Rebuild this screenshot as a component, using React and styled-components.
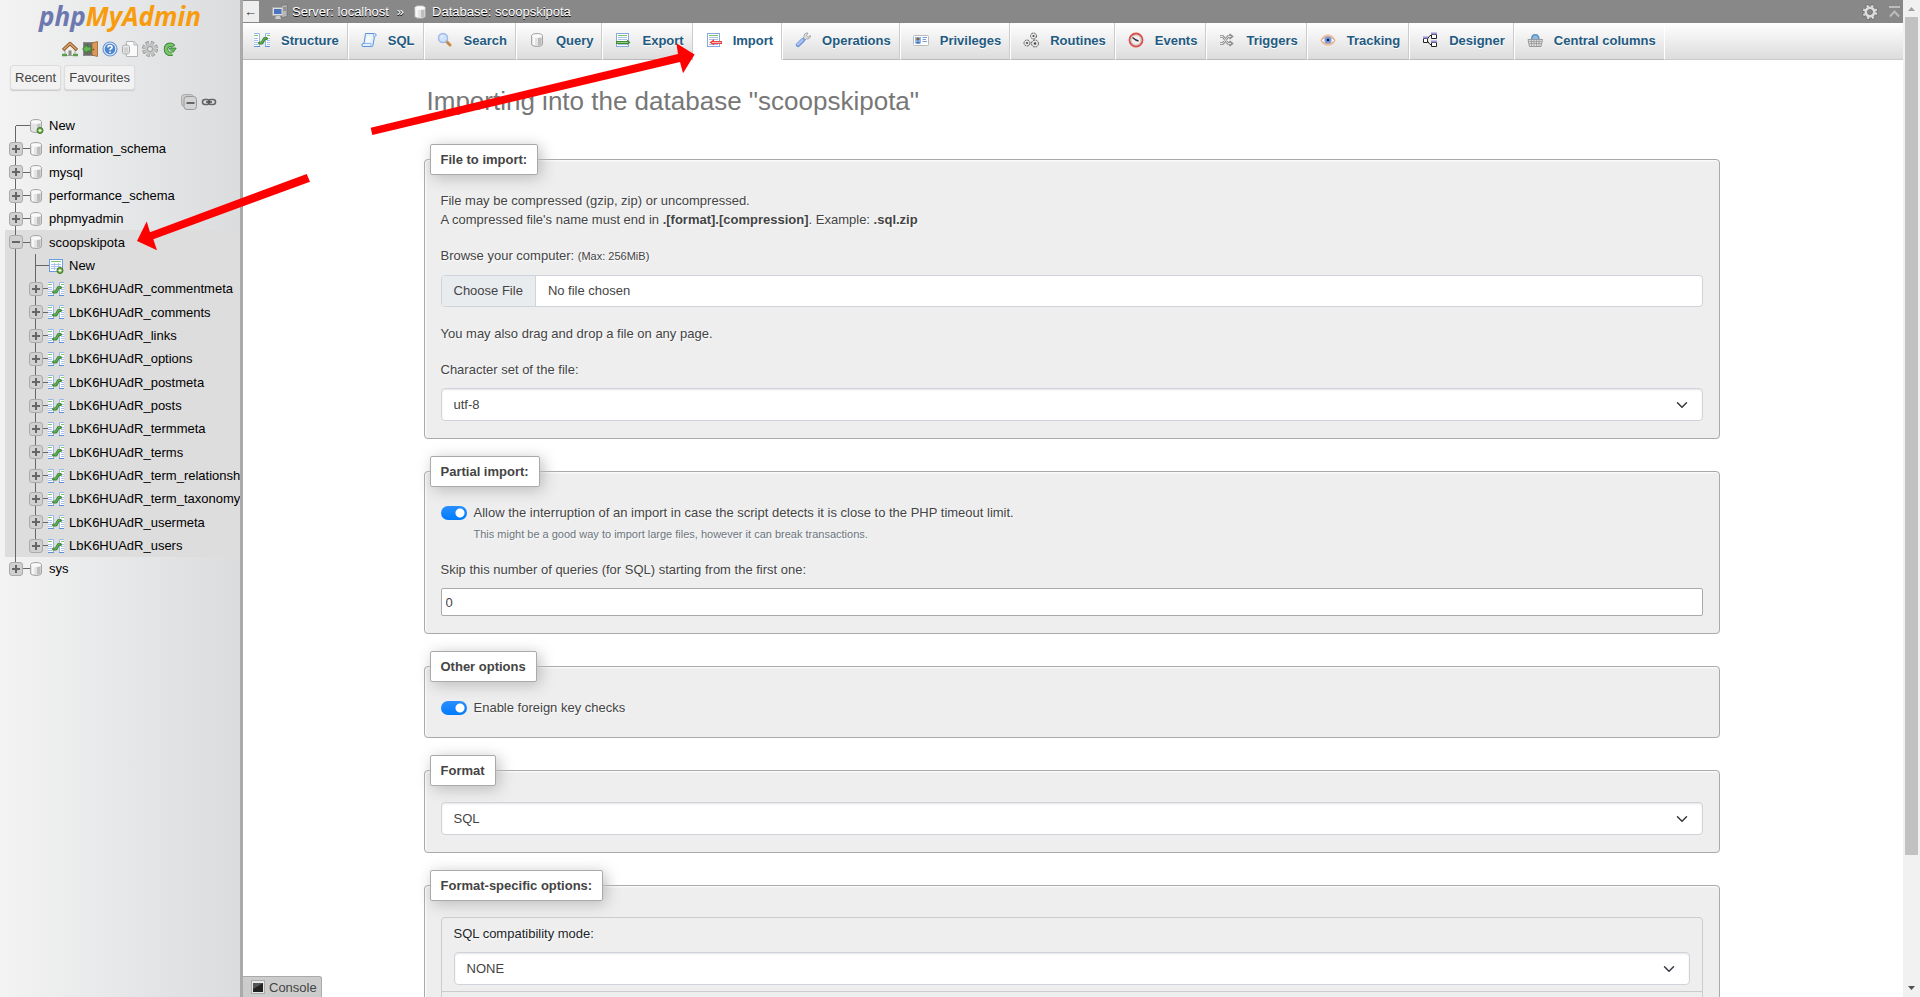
import React, { useState } from 'react'
import styled, { createGlobalStyle, css } from 'styled-components'


const TABLES = [
    'commentmeta',
    'comments',
    'links',
    'options',
    'postmeta',
    'posts',
    'termmeta',
    'terms',
    'term_relationships',
    'term_taxonomy',
    'usermeta',
    'users',
]

const TABS = [
    { label: 'Structure', icon: StructureIcon },
    { label: 'SQL', icon: SqlIcon },
    { label: 'Search', icon: SearchIcon },
    { label: 'Query', icon: DatabaseIcon },
    { label: 'Export', icon: ExportIcon },
    { label: 'Import', icon: ImportIcon, active: true },
    { label: 'Operations', icon: WrenchIcon },
    { label: 'Privileges', icon: CardIcon },
    { label: 'Routines', icon: RoutinesIcon },
    { label: 'Events', icon: ClockIcon },
    { label: 'Triggers', icon: ShuffleIcon },
    { label: 'Tracking', icon: EyeIcon },
    { label: 'Designer', icon: DesignerIcon },
    { label: 'Central columns', icon: BasketIcon },
]


export default function App() {
    const [skip, setSkip] = useState(0)
    const [partial, setPartial] = useState(true)
    const [foreign, setForeign] = useState(true)

    return (
        <>
            <GlobalStyle />
            <Layout>
                <Sidebar />
                <Main>
                    <TopBar>
                        <CollapseButton type="button" aria-label="Hide panel">←</CollapseButton>
                        <Crumb href="#server"><ServerIcon />Server: localhost</Crumb>
                        <Separator>»</Separator>
                        <Crumb href="#database"><DatabaseIcon />Database: scoopskipota</Crumb>
                        <TopActions>
                            <IconButton type="button" aria-label="Page-related settings"><GearIcon color="#ddd" edge="#666" /></IconButton>
                            <IconButton type="button" aria-label="Click on the bar to scroll to top of page"><ToTopIcon /></IconButton>
                        </TopActions>
                    </TopBar>
                    <TabBar>
                        {TABS.map(({ label, icon: Icon, active }) => (
                            <Tab key={label} href={`#${label}`} $active={active}>
                                <Icon />
                                {label}
                            </Tab>
                        ))}
                    </TabBar>
                    <Content>
                        <Title>Importing into the database "scoopskipota"</Title>

                        <Card>
                            <Legend>File to import:</Legend>
                            <Text>
                                File may be compressed (gzip, zip) or uncompressed.<br />
                                A compressed file's name must end in <b>.[format].[compression]</b>. Example: <b>.sql.zip</b>
                            </Text>
                            <Field>
                                <Label htmlFor="import_file">Browse your computer: <small>(Max: 256MiB)</small></Label>
                                <FileInput id="import_file" type="file" />
                            </Field>
                            <Text>You may also drag and drop a file on any page.</Text>
                            <Field>
                                <Label htmlFor="charset">Character set of the file:</Label>
                                <SelectBox id="charset" options={['utf-8']} />
                            </Field>
                        </Card>

                        <Card>
                            <Legend>Partial import:</Legend>
                            <div>
                                <SwitchRow>
                                    <Switch id="partial" type="checkbox" checked={partial} onChange={() => setPartial(!partial)} />
                                    <label htmlFor="partial">Allow the interruption of an import in case the script detects it is close to the PHP timeout limit.</label>
                                </SwitchRow>
                                <Help>This might be a good way to import large files, however it can break transactions.</Help>
                            </div>
                            <Field>
                                <Label htmlFor="skip">Skip this number of queries (for SQL) starting from the first one:</Label>
                                <NumberInput id="skip" type="number" min="0" value={skip} onChange={(e) => setSkip(e.target.value)} />
                            </Field>
                        </Card>

                        <Card>
                            <Legend>Other options</Legend>
                            <SwitchRow>
                                <Switch id="foreign" type="checkbox" checked={foreign} onChange={() => setForeign(!foreign)} />
                                <label htmlFor="foreign">Enable foreign key checks</label>
                            </SwitchRow>
                        </Card>

                        <Card>
                            <Legend>Format</Legend>
                            <SelectBox aria-label="Format" options={['SQL']} />
                        </Card>

                        <Card>
                            <Legend>Format-specific options:</Legend>
                            <OptionList>
                                <OptionItem>
                                    <Label htmlFor="compat">SQL compatibility mode:</Label>
                                    <SelectBox id="compat" options={['NONE']} />
                                </OptionItem>
                                <OptionItem />
                            </OptionList>
                        </Card>
                    </Content>
                    <ConsoleTab type="button"><ConsoleIcon />Console</ConsoleTab>
                </Main>
                <Scrollbar aria-hidden="true">
                    <ScrollArrow viewBox="0 0 17 17"><path d="M5 11l3.500-4 3.500 4z" fill="#a0a0a0" /></ScrollArrow>
                    <Track><Thumb /></Track>
                    <ScrollArrow viewBox="0 0 17 17"><path d="M5 6h7l-3.500 4z" fill="#505050" /></ScrollArrow>
                </Scrollbar>
                <Arrows />
            </Layout>
        </>
    )
}


function Sidebar() {
    return (
        <Navigation>
            <Logo href="#home"><span>php</span>MyAdmin</Logo>
            <NavIcons>
                <IconButton type="button" aria-label="Home"><HomeIcon /></IconButton>
                <IconButton type="button" aria-label="Log out"><ExitIcon /></IconButton>
                <IconButton type="button" aria-label="phpMyAdmin documentation"><HelpIcon /></IconButton>
                <IconButton type="button" aria-label="Documentation"><DocsIcon /></IconButton>
                <IconButton type="button" aria-label="Navigation panel settings"><GearIcon color="#c4c4c4" edge="#8c8c8c" /></IconButton>
                <IconButton type="button" aria-label="Reload navigation panel"><ReloadIcon /></IconButton>
            </NavIcons>
            <NavButtons>
                <NavButton type="button">Recent</NavButton>
                <NavButton type="button">Favourites</NavButton>
            </NavButtons>
            <TreeTools>
                <IconButton type="button" aria-label="Collapse all"><CollapseAllIcon /></IconButton>
                <IconButton type="button" aria-label="Unlink from main panel"><LinkIcon /></IconButton>
            </TreeTools>
            <Tree>
                <TreeNode label="New" icon={<NewDatabaseIcon />} leaf />
                <TreeNode label="information_schema" icon={<DatabaseIcon />} />
                <TreeNode label="mysql" icon={<DatabaseIcon />} />
                <TreeNode label="performance_schema" icon={<DatabaseIcon />} />
                <TreeNode label="phpmyadmin" icon={<DatabaseIcon />} />
                <TreeNode label="scoopskipota" icon={<DatabaseIcon />} open>
                    <SubTree>
                        <TreeNode label="New" icon={<NewTableIcon />} leaf />
                        {TABLES.map((name) => (
                            <TreeNode key={name} label={`LbK6HUAdR_${name}`} icon={<StructureIcon />} />
                        ))}
                    </SubTree>
                </TreeNode>
                <TreeNode label="sys" icon={<DatabaseIcon />} />
            </Tree>
            <Resizer />
        </Navigation>
    )
}

function TreeNode({ label, icon, leaf, open, children }) {
    return (
        <TreeItem $open={open}>
            <TreeRow>
                {leaf ? <Elbow /> : (
                    <>
                        <Toggle type="button" aria-label={`${open ? 'Collapse' : 'Expand'} ${label}`}>
                            <svg width="8" height="8" viewBox="0 0 8 8" stroke="#666" strokeWidth="2">
                                <path d={open ? 'M0 4H8' : 'M0 4H8M4 0V8'} />
                            </svg>
                        </Toggle>
                        <Branch />
                    </>
                )}
                {icon}
                <TreeLink href={`#${label}`}>{label}</TreeLink>
            </TreeRow>
            {children}
        </TreeItem>
    )
}

function SelectBox({ options, ...rest }) {
    return (
        <SelectWrap>
            <Select {...rest}>
                {options.map((o) => <option key={o}>{o}</option>)}
            </Select>
            <Chevron viewBox="0 0 16 16"><path d="M2 5l6 6 6-6" /></Chevron>
        </SelectWrap>
    )
}


/* icons */

function Icon({ children, size = 16 }) {
    return <IconSvg width={size} height={size} viewBox="0 0 16 16" fill="none" aria-hidden="true">{children}</IconSvg>
}

function StructureIcon() {
    return (
        <Icon>
            <path d="M0 1H6V15H0ZM11 1H16V15H11Z" fill="#fff" />
            <path d="M0 1.500H5.500V14M16 1.500H11.500V14" stroke="#9ab6e6" />
            <path d="M0 14.500H6M11 14.500H16" stroke="#5f8fd6" />
            <path d="M0 3.500H4M13 3.500H16" stroke="#7cc46c" />
            <path d="M0 6.500H4M0 8.500H4M0 10.500H4M0 12.500H4M13 6.500H16M13 8.500H16M13 10.500H16M13 12.500H16" stroke="#a9bfe6" />
            <path d="M5.500 11H8L10.500 6.500H12.500" stroke="#3f8a38" strokeWidth="3" strokeLinecap="round" strokeLinejoin="round" />
            <path d="M6 10.800H8L10.500 6.300H12" stroke="#6cb860" strokeLinecap="round" />
        </Icon>
    )
}

function SqlIcon() {
    return (
        <Icon>
            <path d="M4.500 1.500H13.500C15.500 1.500 15.500 4.500 13.500 4.500L12 13C12 14.500 11 15 10 14.500H2C.5 14.500 .5 11.500 2 11.500H3Z" fill="#e3effc" stroke="#5b92d8" />
            <path d="M3 11.500H10V14.500M12.500 1.500V4.500H14" stroke="#8fb7e8" />
            <path d="M6 4H11L9.500 10H4.500Z" fill="#fff" opacity=".6" />
        </Icon>
    )
}

function SearchIcon() {
    return (
        <Icon>
            <path d="M9.500 9.500L13 13" stroke="#c98a45" strokeWidth="3" strokeLinecap="round" />
            <circle cx="6" cy="6" r="4.500" fill="#cfe2fa" stroke="#9db9e6" strokeWidth="1.500" />
            <path d="M4 5.500C4.300 4.500 5 4 6 4" stroke="#fff" />
        </Icon>
    )
}

function DatabaseIcon() {
    return (
        <Icon>
            <path d="M2.500 4C2.500 .7 13.500 .7 13.500 4V12C13.500 15.300 2.500 15.300 2.500 12Z" fill="#e4e4e4" stroke="#a5a5a5" />
            <path d="M9 5.500H12.500V12.500C11.500 13.300 10 13.500 9 13.500Z" fill="#bdbdbd" />
            <path d="M5 5.500V13" stroke="#fff" strokeWidth="1.500" />
            <ellipse cx="8" cy="4" rx="5" ry="1.800" fill="#fafafa" />
        </Icon>
    )
}

function Plus() {
    return (
        <>
            <circle cx="12" cy="12.500" r="3" fill="#6fae45" stroke="#3f7a26" />
            <path d="M10.500 12.500H13.500M12 11V14" stroke="#fff" />
        </>
    )
}

function NewDatabaseIcon() {
    return (
        <Icon>
            <path d="M2.500 4C2.500 .7 13.500 .7 13.500 4V12C13.500 15.300 2.500 15.300 2.500 12Z" fill="#e4e4e4" stroke="#a5a5a5" />
            <path d="M9 5.500H12.500V12.500H9Z" fill="#c4c4c4" />
            <ellipse cx="8" cy="4" rx="5" ry="1.800" fill="#fafafa" />
            <Plus />
        </Icon>
    )
}

function NewTableIcon() {
    return (
        <Icon>
            <rect x="1.500" y="1.500" width="13" height="12" fill="#fff" stroke="#6b9bdc" />
            <path d="M3 3.500H13" stroke="#7cc46c" />
            <path d="M3 6.500H13M3 8.500H13M3 10.500H13M6.500 5V12M10.500 5V12" stroke="#a9c4ee" />
            <Plus />
        </Icon>
    )
}

function ExportIcon() {
    return (
        <Icon>
            <rect x="1.500" y="1.500" width="12" height="13" fill="#fff" stroke="#84a9e0" />
            <path d="M3 3.500H12" stroke="#7cc46c" />
            <path d="M3 5.500H12M3 7.500H12M3 12.500H12" stroke="#a9bfe6" />
            <path d="M1 9H12V7.500L15.500 10.500L12 13V12H1Z" fill="#3f8a38" />
            <path d="M2 10.500H13" stroke="#8fcf80" />
        </Icon>
    )
}

function ImportIcon() {
    return (
        <Icon>
            <rect x="1.500" y="1.500" width="12" height="13" fill="#fff" stroke="#84a9e0" />
            <path d="M3 3.500H12" stroke="#7cc46c" />
            <path d="M3 5.500H12M3 7.500H12M3 12.500H12" stroke="#a9bfe6" />
            <path d="M16 9H8V7L3.500 10.500L8 13.500V12H16Z" fill="#ea4444" />
            <path d="M6 10.500H15" stroke="#f9b4b4" />
        </Icon>
    )
}

function WrenchIcon() {
    return (
        <Icon>
            <path d="M8 7L9 5C8.500 2.500 10.500 .5 13 1L11.500 3.500L13 5L15.500 3.500C15.500 6 13.500 7.500 11 7L9.500 8.500Z" fill="#ddd" stroke="#999" strokeWidth=".8" />
            <path d="M3 13L8 8" stroke="#6f93d8" strokeWidth="4.400" strokeLinecap="round" />
            <path d="M3 12.500L7.500 8" stroke="#a9c4f5" strokeWidth="2.400" strokeLinecap="round" />
        </Icon>
    )
}

function CardIcon() {
    return (
        <Icon>
            <rect x=".5" y="3.500" width="15" height="10" rx="1" fill="#fff" stroke="#bbb" />
            <rect x="2" y="5" width="6" height="6.500" fill="#8fb9ee" />
            <circle cx="5" cy="7" r="1.600" fill="#8a5a30" />
            <path d="M3 11.500C3 9 7 9 7 11.500Z" fill="#3a67b0" />
            <path d="M9.500 5.500H14M9.500 7.500H13M9.500 9.500H14" stroke="#7a9fd0" />
        </Icon>
    )
}

function RoutinesIcon() {
    return (
        <Icon>
            <g stroke="#555" strokeDasharray="2 .8">
                <circle cx="10.500" cy="4" r="3" fill="#e6e6e6" />
                <circle cx="4" cy="11" r="3" fill="#e6e6e6" />
                <circle cx="12" cy="11.500" r="3.500" fill="#e6e6e6" />
            </g>
            <g fill="#444">
                <circle cx="10.500" cy="4" r="1" />
                <circle cx="4" cy="11" r="1" />
                <circle cx="12" cy="11.500" r="1.200" />
            </g>
        </Icon>
    )
}

function ClockIcon() {
    return (
        <Icon>
            <circle cx="8" cy="8" r="6.500" fill="#f1efef" stroke="#dd4b4b" strokeWidth="1.800" />
            <circle cx="8" cy="8" r="5" stroke="#b5b5b5" strokeWidth=".8" />
            <path d="M4.500 5.500L8 8L10.500 9" stroke="#333" strokeWidth="1.500" />
        </Icon>
    )
}

function ShuffleIcon() {
    return (
        <Icon>
            <g stroke="#8b8b8b" strokeWidth="2.600">
                <path d="M1 4.500H4L9 11.500H12M1 11.500H4L9 4.500H12" />
                <path d="M10.500 2L13.500 4.500L10.500 7M10.500 9L13.500 11.500L10.500 14" strokeWidth="1.600" />
            </g>
            <path d="M1 4.500H4L9 11.500H12M1 11.500H4L9 4.500H12" stroke="#e2e2e2" />
        </Icon>
    )
}

function EyeIcon() {
    return (
        <Icon>
            <path d="M.5 8.500C3 .5 13 .5 15.500 8.500C13 15.500 3 15.500 .5 8.500Z" fill="#eec09c" />
            <path d="M1.500 8.500C4 4 12 4 14.500 8.500C12 12.500 4 12.500 1.500 8.500Z" fill="#fff" stroke="#c99a77" strokeWidth=".8" />
            <circle cx="8" cy="8" r="3.600" fill="#6f9bea" />
            <circle cx="8" cy="8" r="1.300" fill="#112" />
        </Icon>
    )
}

function DesignerIcon() {
    return (
        <Icon>
            <path d="M5 7.500L8 3.500H9M5 8.500L8 12.500H9" stroke="#222" />
            <path d="M1.500 6.500H5.500V10.500H1.500ZM9.500 2.500H14.500V6.500H9.500ZM9.500 10.500H14.500V14.500H9.500Z" fill="#fff" stroke="#222" />
            <path d="M1 5.500H6M9 1.500H15M9 9.500H15" stroke="#9a94d8" strokeWidth="2" />
        </Icon>
    )
}

function BasketIcon() {
    return (
        <Icon>
            <path d="M4.500 8C4.500 1 12 1 12 8" fill="#8fbbe0" stroke="#5f93bf" strokeWidth="1.400" />
            <path d="M1 7.500H15.500L14 14.500H2.500Z" fill="#dedede" stroke="#999" />
            <path d="M2 9.500H14.500M2.500 11.500H14M4.500 8V14M7 8V14M9.500 8V14M12 8V14" stroke="#999" strokeWidth=".8" />
        </Icon>
    )
}

function ServerIcon() {
    return (
        <Icon>
            <path d="M9.500 1.500L15 .5V12.500L9.500 13.500Z" fill="#b8b8b8" stroke="#666" strokeWidth=".6" />
            <path d="M11 4H14M11 6H14" stroke="#666" />
            <rect x=".5" y="3.500" width="10.500" height="8" rx=".5" fill="#ddd" stroke="#aaa" />
            <rect x="2" y="5" width="7.500" height="5" fill="#4a74bd" />
            <path d="M3 15H9L8 12H4Z" fill="#ccc" />
        </Icon>
    )
}

function GearIcon({ color, edge }) {
    return (
        <Icon>
            <circle cx="8" cy="8" r="6" stroke={edge} strokeWidth="4" strokeDasharray="3 1.712" />
            <circle cx="8" cy="8" r="5.700" stroke={color} strokeWidth="3.400" strokeDasharray="2 2.477" strokeDashoffset="-.5" />
            <circle cx="8" cy="8" r="4" stroke={color} strokeWidth="3" />
            <circle cx="8" cy="8" r="2.500" stroke={edge} strokeWidth=".8" />
        </Icon>
    )
}

function ToTopIcon() {
    return <Icon><path d="M3 3H14M4 12.500L8.500 7.500L13 12.500" stroke="#bbb" strokeWidth="2" /></Icon>
}

function HomeIcon() {
    return (
        <Icon>
            <path d="M3 8L8 4L13 8V14.500H3Z" fill="#f0eee8" stroke="#999" strokeWidth=".8" />
            <path d="M1 9L8 2.500L15 9" stroke="#8d5424" strokeWidth="3.200" strokeLinejoin="round" />
            <path d="M1.500 8.500L8 2.500L14.500 8.500" stroke="#dba56c" strokeWidth="1.600" />
            <path d="M6.500 14.500V9.500H9.500V14.500Z" fill="#8a8a8a" />
            <path d="M0 14H5M11 14H16" stroke="#58a048" strokeWidth="2.400" />
        </Icon>
    )
}

function ExitIcon() {
    return (
        <Icon>
            <rect x="1.500" y="1.500" width="10" height="13" fill="#6b6b6b" stroke="#8a8a8a" />
            <path d="M10 2L15.500 .5V15.500L10 14Z" fill="#d69a5c" stroke="#9c6530" strokeWidth=".8" />
            <path d="M9 6H5.500V3.500L.5 8L5.500 12.500V10H9Z" fill="#62b455" stroke="#2f7d2a" strokeWidth=".8" />
            <circle cx="11.500" cy="8.500" r=".8" fill="#6a4018" />
        </Icon>
    )
}

function HelpIcon() {
    return (
        <Icon>
            <circle cx="8" cy="8" r="7" fill="#eaf1fb" stroke="#6b96d2" strokeWidth="1.200" />
            <circle cx="8" cy="8" r="5.400" fill="#4f86d0" />
            <path d="M5.900 6.400C5.900 3.900 10.300 4 10.100 6.400C10 7.800 8 7.600 8 9.200M8 10.400V11.900" stroke="#fff" strokeWidth="1.600" />
        </Icon>
    )
}

function DocsIcon() {
    return (
        <Icon>
            <path d="M4.500 .5H12L15.500 4V15.500H4.500Z" fill="#fafafa" stroke="#b5b5b5" />
            <path d="M12 .5V4H15.500" stroke="#b5b5b5" />
            <path d="M.5 5.500C.5 3.500 7.500 3.500 7.500 5.500V11.500C7.500 13.500 .5 13.500 .5 11.500Z" fill="#e6e6e6" stroke="#aaa" />
            <path d="M3 6.500V11.500M5 6.500V11.500" stroke="#bbb" />
        </Icon>
    )
}

function ReloadIcon() {
    return (
        <Icon>
            <path d="M11.500 5.500C9.500 2.500 4 3.500 4 8C4 12.500 8 13.500 10 12.500" stroke="#2f7d2a" strokeWidth="4.400" />
            <path d="M11 5C9 2.700 4 3.700 4 8C4 12.300 8 13.500 10 12.500" stroke="#7cc46c" strokeWidth="2.800" />
            <path d="M7.500 7H14L14 7.500L11 11.500L7.500 8Z" fill="#6cb860" stroke="#2f7d2a" strokeWidth=".8" />
        </Icon>
    )
}

function CollapseAllIcon() {
    return (
        <Icon>
            <rect x=".5" y=".5" width="12" height="12" rx="3" fill="#ccc" stroke="#aaa" />
            <rect x="3" y="2.500" width="12.500" height="13" rx="3" fill="#d4d4d4" stroke="#999" />
            <path d="M5.500 9H13.500" stroke="#666" strokeWidth="2" />
        </Icon>
    )
}

function LinkIcon() {
    return (
        <Icon>
            <rect x="1.500" y="5.500" width="7" height="5" rx="2.500" stroke="#666" strokeWidth="1.600" />
            <rect x="7.500" y="5.500" width="7" height="5" rx="2.500" stroke="#666" strokeWidth="1.600" />
            <path d="M5 8H11" stroke="#555" strokeWidth="1.600" />
        </Icon>
    )
}

function ConsoleIcon() {
    return (
        <Icon>
            <rect x="1.500" y="1.500" width="13" height="13" fill="#e8e8e8" stroke="#aaa" />
            <rect x="3" y="4" width="10" height="9" fill="#222" />
            <path d="M3 10L13 4H3Z" fill="#555" />
        </Icon>
    )
}

function Arrows() {
    return (
        <ArrowLayer width="700" height="260" viewBox="0 0 700 260" fill="#f00" aria-hidden="true">
            <path d="M370.700 127.700L678 54L676.400 43.300L694.600 54.500L683 73.300L680 62L372.300 135Z" />
            <path d="M306.700 174L150 232.300L146.700 221.500L137 241L157 250.300L153.300 239.300L310 181.700Z" />
        </ArrowLayer>
    )
}


/* styles */

const GlobalStyle = createGlobalStyle`
    *, *::before, *::after {
        box-sizing: border-box;
    }
    body {
        margin: 0;
        background: #fff;
        color: #444;
        font-family: "Liberation Sans", Arial, sans-serif;
        font-size: 13px;
        line-height: 19px;
    }
    button, input, select {
        font-family: inherit;
        font-size: inherit;
        color: inherit;
    }
    a {
        text-decoration: none;
    }
`

const Layout = styled.div`
    position: relative;
    display: flex;
    height: 100vh;
    overflow: hidden;
`

const IconSvg = styled.svg`
    flex: none;
    display: block;
`

const IconButton = styled.button`
    display: flex;
    padding: 0;
    border: none;
    background: none;
    cursor: pointer;
`

const Navigation = styled.nav`
    position: relative;
    z-index: 1;
    flex: none;
    width: 240px;
    background: linear-gradient(to right, #f3f3f3, #dadcde);
    color: #000;
`

const Resizer = styled.div`
    position: absolute;
    top: 0;
    bottom: 0;
    left: 100%;
    width: 3px;
    background: #aaa;
    cursor: col-resize;
`

const Logo = styled.a`
    display: block;
    height: 41px;
    text-align: center;
    font-family: "Open Sans", sans-serif;
    font-size: 26px;
    font-style: italic;
    font-weight: 700;
    line-height: 33px;
    color: #f89c0e;

    span {
        color: #6c78af;
    }
`

const NavIcons = styled.div`
    display: flex;
    justify-content: center;
    gap: 4px;
`

const NavButtons = styled.div`
    display: flex;
    gap: 3px;
    padding: 8px 10px 4px;
`

const NavButton = styled.button`
    height: 25px;
    padding: 0 4px;
    border: 1px solid #ddd;
    border-radius: 3px;
    background: #f2f2f2;
    box-shadow: 0 1px 1px #ccc;
    color: #444;
    cursor: pointer;
`

const TreeTools = styled.div`
    display: flex;
    justify-content: flex-end;
    gap: 4px;
    padding-right: 23px;
`

const line = 'linear-gradient(#666, #666) no-repeat'

const Tree = styled.ul`
    list-style: none;
    margin: 4px 0 0 5px;
    padding: 0;
    background: ${line} 10px 12px / 1px calc(100% - 24px);
`

const SubTree = styled.ul`
    list-style: none;
    margin: 0 0 0 20px;
    padding: 0;
    background: ${line} 10px 0 / 1px calc(100% - 12px);
`

const TreeRow = styled.div`
    display: flex;
    align-items: center;
    height: 23px;
    padding-left: 4px;
`

const TreeItem = styled.li`
    overflow: hidden;
    ${({ $open }) => $open && css`background: ${line} 10px 0 / 1px 100%, #ddd;`}

    &:nth-child(3n) > ${TreeRow} {
        height: 24px;
    }
`

const TreeLink = styled.a`
    margin-left: 5px;
    color: #000;
    white-space: nowrap;
`

const Toggle = styled.button`
    display: flex;
    align-items: center;
    justify-content: center;
    flex: none;
    width: 14px;
    height: 14px;
    padding: 0;
    border: 1px solid #aaa;
    border-radius: 3px;
    background: #d0d0d0;
    cursor: pointer;
`

const Branch = styled.span`
    flex: none;
    width: 7px;
    height: 1px;
    margin-right: -2px;
    background: #666;
`

const Elbow = styled.span`
    flex: none;
    width: 14px;
    height: 1px;
    margin: 0 -2px 0 7px;
    background: #666;
`

const Main = styled.main`
    position: relative;
    flex: 1;
    min-width: 0;
    overflow: hidden;
`

const TopBar = styled.header`
    display: flex;
    align-items: center;
    height: 23px;
    background: #888;
    color: #fff;
    text-shadow: 0 1px 0 #000;
`

const CollapseButton = styled.button`
    width: 19px;
    height: 21px;
    margin-right: 13px;
    padding: 0 0 0 2px;
    border: none;
    background: #eee;
    color: #333;
    line-height: 19px;
`

const Crumb = styled.a`
    display: flex;
    align-items: center;
    gap: 4px;
    color: #fff;
`

const Separator = styled.span`
    margin: 0 8px;
`

const TopActions = styled.div`
    display: flex;
    gap: 8px;
    margin-left: auto;
    padding-right: 1px;
`

const TabBar = styled.nav`
    display: flex;
    height: 37px;
    padding-left: 1px;
    border-bottom: 1px solid #ccc;
    background: linear-gradient(#fff, #dcdcdc);
`

const Tab = styled.a`
    display: flex;
    align-items: center;
    gap: 11px;
    height: 37px;
    padding: 0 8px 2px 12px;
    border-left: 1px solid #fff;
    border-right: 1px solid #ccc;
    border-bottom: 1px solid #bbb;
    color: #235a81;
    font-weight: bold;
    text-shadow: 0 1px 0 #fff;
    white-space: nowrap;

    ${({ $active }) => $active && css`
        background: #fff;
        border-bottom-color: #fff;
    `}

    &:last-child {
        border-right-color: #fff;
    }
`

const Content = styled.div`
    display: flex;
    flex-direction: column;
    gap: 17px;
    max-width: 1320px;
    margin: 0 auto;
    padding: 26px 12px;
`

const Title = styled.h2`
    margin: 0 0 10px;
    padding-left: 3px;
    color: #777;
    font-size: 26px;
    font-weight: normal;
    line-height: 31px;
`

const Card = styled.fieldset`
    min-width: 0;
    margin: 0;
    padding: 16px 16px 0;
    border: 1px solid #aaa;
    border-radius: 4px;
    background: #eee;
    box-shadow: 1px 1px 2px #fff inset;
    text-shadow: 1px 1px 2px #fff;

    > *:not(legend) {
        margin-top: 0;
        margin-bottom: 17px;
    }
`

const Legend = styled.legend`
    height: 31px;
    margin-left: -11px;
    padding: 0 10px;
    border: 1px solid #aaa;
    border-radius: 2px;
    background: #fff;
    box-shadow: 3px 3px 15px #bbb;
    font-weight: bold;
    line-height: 29px;
`

const Text = styled.p`
    margin: 0;
`

const Field = styled.div`
    display: flex;
    flex-direction: column;
`

const Label = styled.label`
    display: block;
    margin-bottom: 9px;

    small {
        font-size: 11px;
    }
`

const FileInput = styled.input`
    width: 100%;
    height: 32px;
    border: 1px solid #ced4da;
    border-radius: 4px;
    background: #fff;
    line-height: 30px;
    overflow: hidden;

    &::file-selector-button {
        height: 30px;
        margin-right: 12px;
        padding: 0 12px;
        border: none;
        border-right: 1px solid #ced4da;
        background: #e9ecef;
        color: inherit;
        font: inherit;
    }
`

const SelectWrap = styled.div`
    position: relative;
`

const Select = styled.select`
    display: block;
    appearance: none;
    width: 100%;
    height: 33px;
    padding: 0 36px 0 12px;
    border: 1px solid #ced4da;
    border-radius: 4px;
    background: #fff;
    box-shadow: inset 0 1px 2px #e4e4e4;
`

const Chevron = styled.svg`
    position: absolute;
    top: 11px;
    right: 15px;
    width: 12px;
    height: 12px;
    fill: none;
    stroke: #343a40;
    stroke-width: 2;
    stroke-linecap: round;
    stroke-linejoin: round;
    pointer-events: none;
`

const NumberInput = styled.input`
    width: 100%;
    height: 28px;
    padding: 0 4px;
    border: 1px solid #aaa;
    border-radius: 2px;
    background: #fff;
`

const SwitchRow = styled.div`
    display: flex;
    align-items: flex-start;
    gap: 7px;
    height: 22px;
`

const Switch = styled.input`
    appearance: none;
    flex: none;
    width: 26px;
    height: 14px;
    margin: 3px 0 0;
    border-radius: 7px;
    background: radial-gradient(circle at 19px 7px, #fff 4px, transparent 5px), linear-gradient(#2a8fff, #007bff);
`

const Help = styled.div`
    padding-left: 33px;
    color: #6c757d;
    font-size: 11px;
    line-height: 18px;
`

const OptionList = styled.ul`
    list-style: none;
    padding: 0;
    border: 1px solid #ccc;
    border-radius: 4px;
    color: #212529;
`

const OptionItem = styled.li`
    padding: 6px 12px;

    & + & {
        min-height: 33px;
        border-top: 1px solid #ccc;
    }

    select {
        color: #444;
    }
`

const ConsoleTab = styled.button`
    position: absolute;
    bottom: 0;
    left: 3px;
    display: flex;
    align-items: center;
    gap: 3px;
    height: 21px;
    padding: 0 4px 0 7px;
    border: 1px solid #aaa;
    border-width: 1px 1px 0 0;
    border-top-right-radius: 3px;
    background: #ccc;
`

const Scrollbar = styled.div`
    display: flex;
    flex-direction: column;
    flex: none;
    width: 17px;
    background: #f1f1f1;
`

const ScrollArrow = styled.svg`
    flex: none;
    width: 17px;
    height: 17px;
`

const Track = styled.div`
    flex: 1;
    padding: 0 2px;
`

const Thumb = styled.div`
    height: 87%;
    background: #c1c1c1;
`

const ArrowLayer = styled.svg`
    position: absolute;
    top: 0;
    left: 0;
    z-index: 2;
    pointer-events: none;
`
